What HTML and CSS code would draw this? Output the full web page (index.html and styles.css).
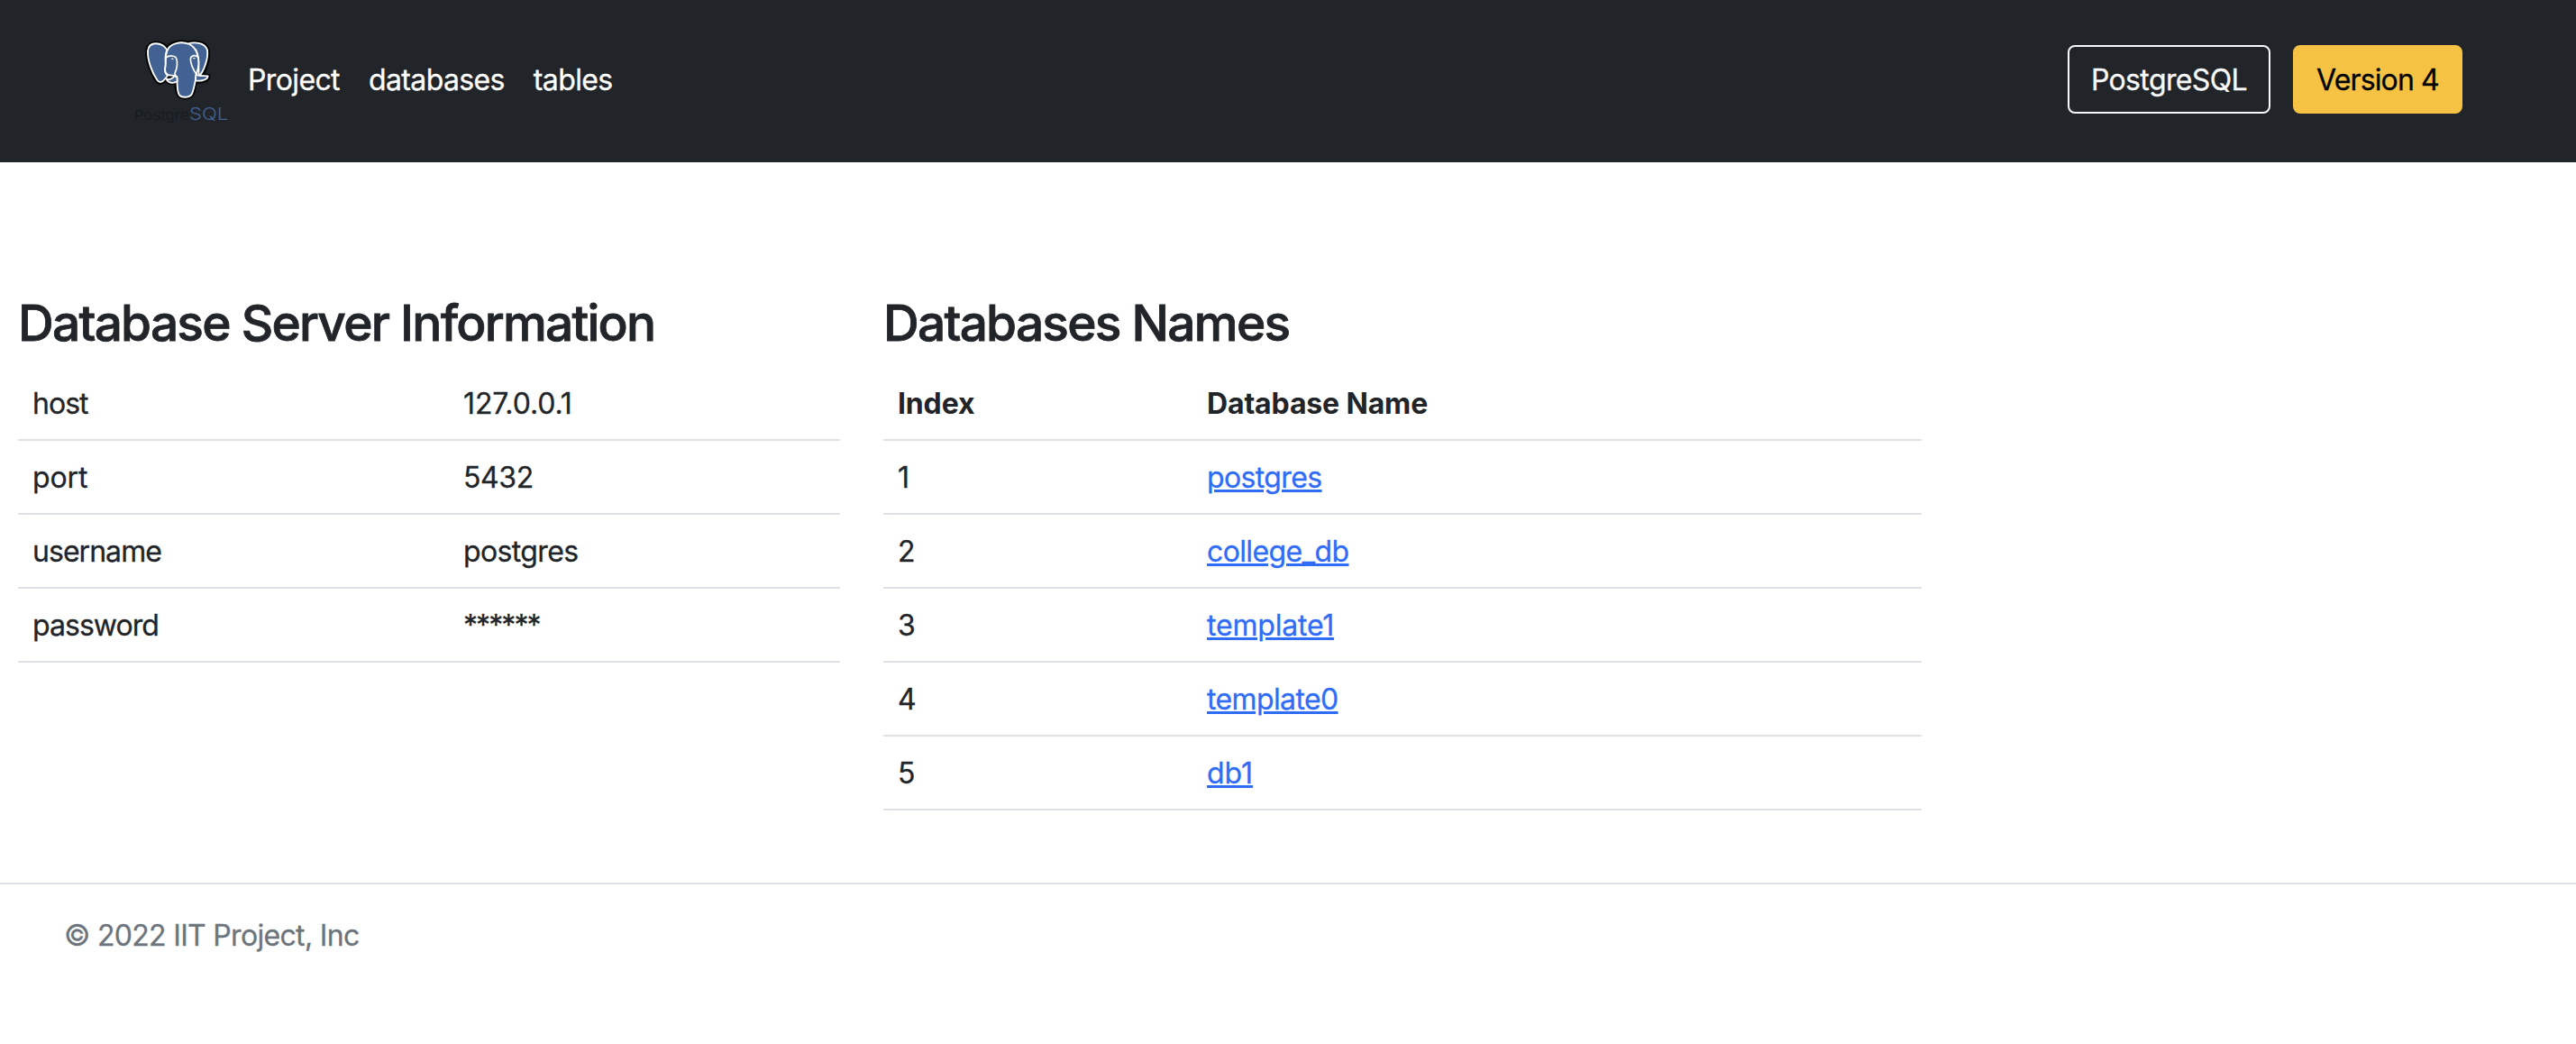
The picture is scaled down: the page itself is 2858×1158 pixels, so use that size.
FILE: index.html
```html
<!DOCTYPE html>
<html lang="en">
<head>
  <meta charset="utf-8">
  <title>PostgreSQL Project</title>
  <link rel="stylesheet" href="styles.css">
</head>
<body>
  <header class="site-header">
    <a class="brand" href="#" aria-label="PostgreSQL">
      <svg class="brand-logo" viewBox="0 0 378 348">
        <g stroke-linejoin="round" stroke-linecap="round">
          <path class="logo-halo" d="M166 76C150 49 105 45 102 80C101 112 116 152 133 176C141 188 151 183 158 174L166 163L172 170C162 172 170 184 184 184L199 180C198 200 200 215 206 225C214 237 242 236 249 222C254 210 256 192 259 179C279 181 301 177 302 164L280 160C293 140 304 104 300 76C291 50 250 49 235 56C210 44 176 56 166 76Z"/>
          <path class="logo-body" d="M166 76C150 49 105 45 102 80C101 112 116 152 133 176C141 188 151 183 158 174L168 162C157 153 158 140 161 129C162 110 157 94 166 76Z"/>
          <path class="logo-body" d="M235 56C255 49 291 50 300 76C304 104 289 147 272 164C269 140 277 105 262 76Z"/>
          <path class="logo-body" d="M166 80C174 53 214 46 240 57C264 68 273 101 271 124C270 135 268 145 265 153C261 176 255 209 249 222C242 236 214 237 206 225C198 211 200 186 199 165C190 159 175 163 168 158C157 151 158 140 161 129C163 113 159 98 166 80Z"/>
          <path class="logo-line" d="M163 101C173 94 191 94 196 102C202 116 200 137 193 151C190 156 193 161 199 166"/>
          <path class="logo-line" d="M268 99C257 91 245 96 244 105C244 122 252 141 265 158"/>
          <path class="logo-tusk" d="M164 173C175 177 186 170 190 163L199 167L200 181C187 189 169 187 164 173Z"/>
          <path class="logo-tusk" d="M262 157C269 165 287 161 302 163C301 176 278 181 261 178Z"/>
          <path class="logo-eye" d="M179 105Q184 102 189 106Q184 110 179 105ZM251 104Q255 100 261 103Q257 108 251 104Z"/>
        </g>
        <text class="logo-word" x="56" y="308" textLength="184" lengthAdjust="spacingAndGlyphs">Postgre</text>
        <text class="logo-sql" x="240" y="309" textLength="130" lengthAdjust="spacingAndGlyphs">SQL</text>
      </svg>
    </a>
    <nav class="nav">
      <a class="nav-link" href="#">Project</a>
      <a class="nav-link" href="#">databases</a>
      <a class="nav-link" href="#">tables</a>
    </nav>
    <div class="actions">
      <button class="btn btn-outline" type="button">PostgreSQL</button>
      <button class="btn btn-warning" type="button">Version 4</button>
    </div>
  </header>

  <main class="content">
    <section>
      <h3 class="title">Database Server Information</h3>
      <table class="table server-table">
        <tbody>
          <tr><td class="key">host</td><td class="wide">127.0.0.1</td></tr>
          <tr><td class="port">port</td><td class="number">5432</td></tr>
          <tr><td class="key">username</td><td>postgres</td></tr>
          <tr><td class="key">password</td><td class="mask">******</td></tr>
        </tbody>
      </table>
    </section>
    <section>
      <h3 class="title">Databases Names</h3>
      <table class="table names-table">
        <thead>
          <tr><th>Index</th><th>Database Name</th></tr>
        </thead>
        <tbody>
          <tr><td>1</td><td><a class="link" href="#">postgres</a></td></tr>
          <tr><td>2</td><td><a class="link" href="#">college_db</a></td></tr>
          <tr><td>3</td><td><a class="link link-one" href="#">template1</a></td></tr>
          <tr><td>4</td><td><a class="link" href="#">template0</a></td></tr>
          <tr><td>5</td><td><a class="link link-short" href="#">db1</a></td></tr>
        </tbody>
      </table>
    </section>
  </main>

  <footer class="site-footer">© 2022 IIT Project, Inc</footer>
</body>
</html>
```
FILE: styles.css
```css
* {
  box-sizing: border-box;
}

body {
  margin: 0;
  background: #fff;
  color: #212529;
  font: 400 32px/48px Inter, "Liberation Sans", sans-serif;
  letter-spacing: -0.62px;
  -webkit-text-stroke: 0.3px;
}

.site-header {
  display: flex;
  align-items: center;
  height: 180px;
  padding: 30px 126px 34px 130px;
  background: #212529;
}

.brand,
.brand-logo {
  display: block;
  width: 126px;
  height: 116px;
}

.logo-halo {
  fill: #000;
  stroke: #000;
  stroke-width: 17;
}

.logo-body {
  fill: #416292;
  stroke: #fff;
  stroke-width: 5.5;
}

.logo-line {
  fill: none;
  stroke: #fff;
  stroke-width: 5;
}

.logo-tusk {
  fill: #416292;
  stroke: #fff;
  stroke-width: 5.5;
}

.logo-eye {
  fill: #fff;
}

.logo-word,
.logo-sql {
  font-family: Inter, "Liberation Sans", sans-serif;
  font-weight: 300;
  letter-spacing: 0;
  -webkit-text-stroke: 0;
}

.logo-word {
  fill: #17191c;
  font-size: 45px;
}

.logo-sql {
  fill: #416292;
  font-size: 56px;
}

.nav {
  display: flex;
  margin-left: 3px;
}

.nav-link {
  padding: 17px 16px 15px;
  color: #fff;
  text-decoration: none;
}

.actions {
  display: flex;
  gap: 25px;
  margin-left: auto;
}

.btn {
  height: 76px;
  padding: 13px 0 11px;
  border: 2px solid;
  border-radius: 8px;
  background: none;
  font: inherit;
  letter-spacing: inherit;
}

.btn-outline {
  width: 225px;
  border-color: #f8f9fa;
  color: #f8f9fa;
}

.btn-warning {
  width: 188px;
  border-color: #f5c244;
  background: #f5c244;
  color: #000;
  letter-spacing: -0.86px;
}

.content {
  display: grid;
  grid-template-columns: 912px 1152px;
  gap: 48px;
  padding: 145px 20px 0;
}

.title {
  margin: 0 0 15px;
  font-size: 55px;
  font-weight: 500;
  line-height: 67px;
  letter-spacing: -1.76px;
  -webkit-text-stroke: 0.8px;
}

.table {
  width: 100%;
  margin-bottom: 32px;
  border-collapse: separate;
  border-spacing: 0;
  table-layout: fixed;
}

.table th,
.table td {
  height: 82px;
  padding: 17px 16px 15px;
  border-bottom: 2px solid #dee2e6;
  text-align: left;
}

.table th {
  font-weight: 700;
  letter-spacing: -0.15px;
  -webkit-text-stroke: 0;
}

.server-table td:first-child {
  width: 478px;
}

.names-table th:first-child {
  width: 343px;
}

.table .key {
  letter-spacing: -0.96px;
}

.table .port,
.table .wide {
  letter-spacing: -0.1px;
}

.table .number {
  letter-spacing: -0.4px;
}

.table .mask {
  letter-spacing: -1.93px;
}

.link {
  color: #2f6df6;
  text-decoration: underline;
  text-decoration-thickness: 3px;
}

.link-one {
  letter-spacing: -0.2px;
}

.link-short {
  letter-spacing: 0;
}

.site-footer {
  margin-top: 48px;
  padding: 33px 71px;
  border-top: 2px solid #dee2e6;
  color: #6c757d;
  letter-spacing: -0.68px;
}
```
